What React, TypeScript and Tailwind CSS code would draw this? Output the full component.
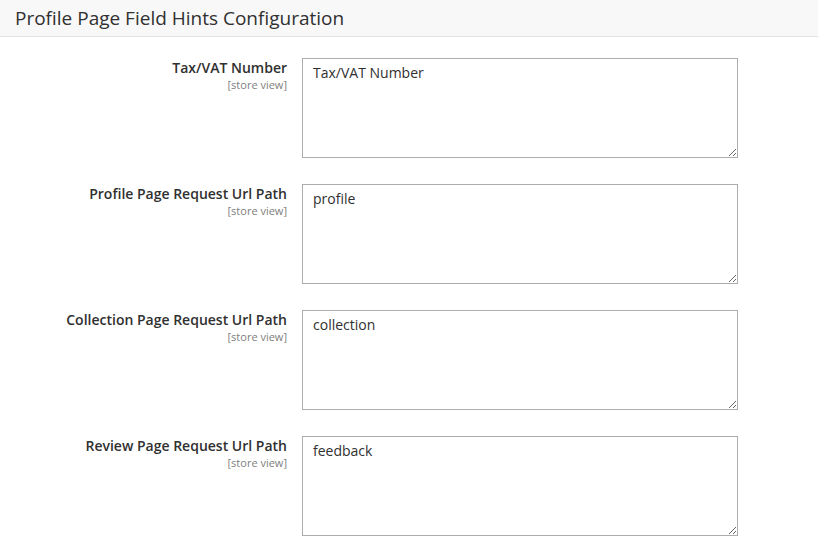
const fields = [
  { label: "Tax/VAT Number", value: "Tax/VAT Number" },
  { label: "Profile Page Request Url Path", value: "profile" },
  { label: "Collection Page Request Url Path", value: "collection" },
  { label: "Review Page Request Url Path", value: "feedback" },
];

export default function App() {
  return (
    <div className="min-h-[544px] w-[818px] bg-white font-['Open_Sans',sans-serif] text-[#303030]">
      <div className="flex h-[37px] items-center border-b border-[#e3e3e3] bg-[#f8f8f8] px-[15px]">
        <h2 className="text-[19px] leading-none text-[#303030]">Profile Page Field Hints Configuration</h2>
      </div>

      <div className="flex flex-col gap-[26px] pt-[21px]">
        {fields.map((f) => (
          <div key={f.label} className="flex items-start">
            <div className="flex w-[287px] shrink-0 flex-col items-end text-right">
              <span className="text-[14px] font-semibold leading-[19px] text-[#303030]">{f.label}</span>
              <span className="text-[11px] leading-[15px] text-[#808080]">[store view]</span>
            </div>
            <textarea
              defaultValue={f.value}
              className="ml-[15px] h-[100px] w-[436px] resize-y border border-[#adadad] bg-white px-[10px] pt-[4px] pb-[6px] text-[14px] leading-[20px] text-[#303030] outline-none"
            />
          </div>
        ))}
      </div>
    </div>
  );
}
